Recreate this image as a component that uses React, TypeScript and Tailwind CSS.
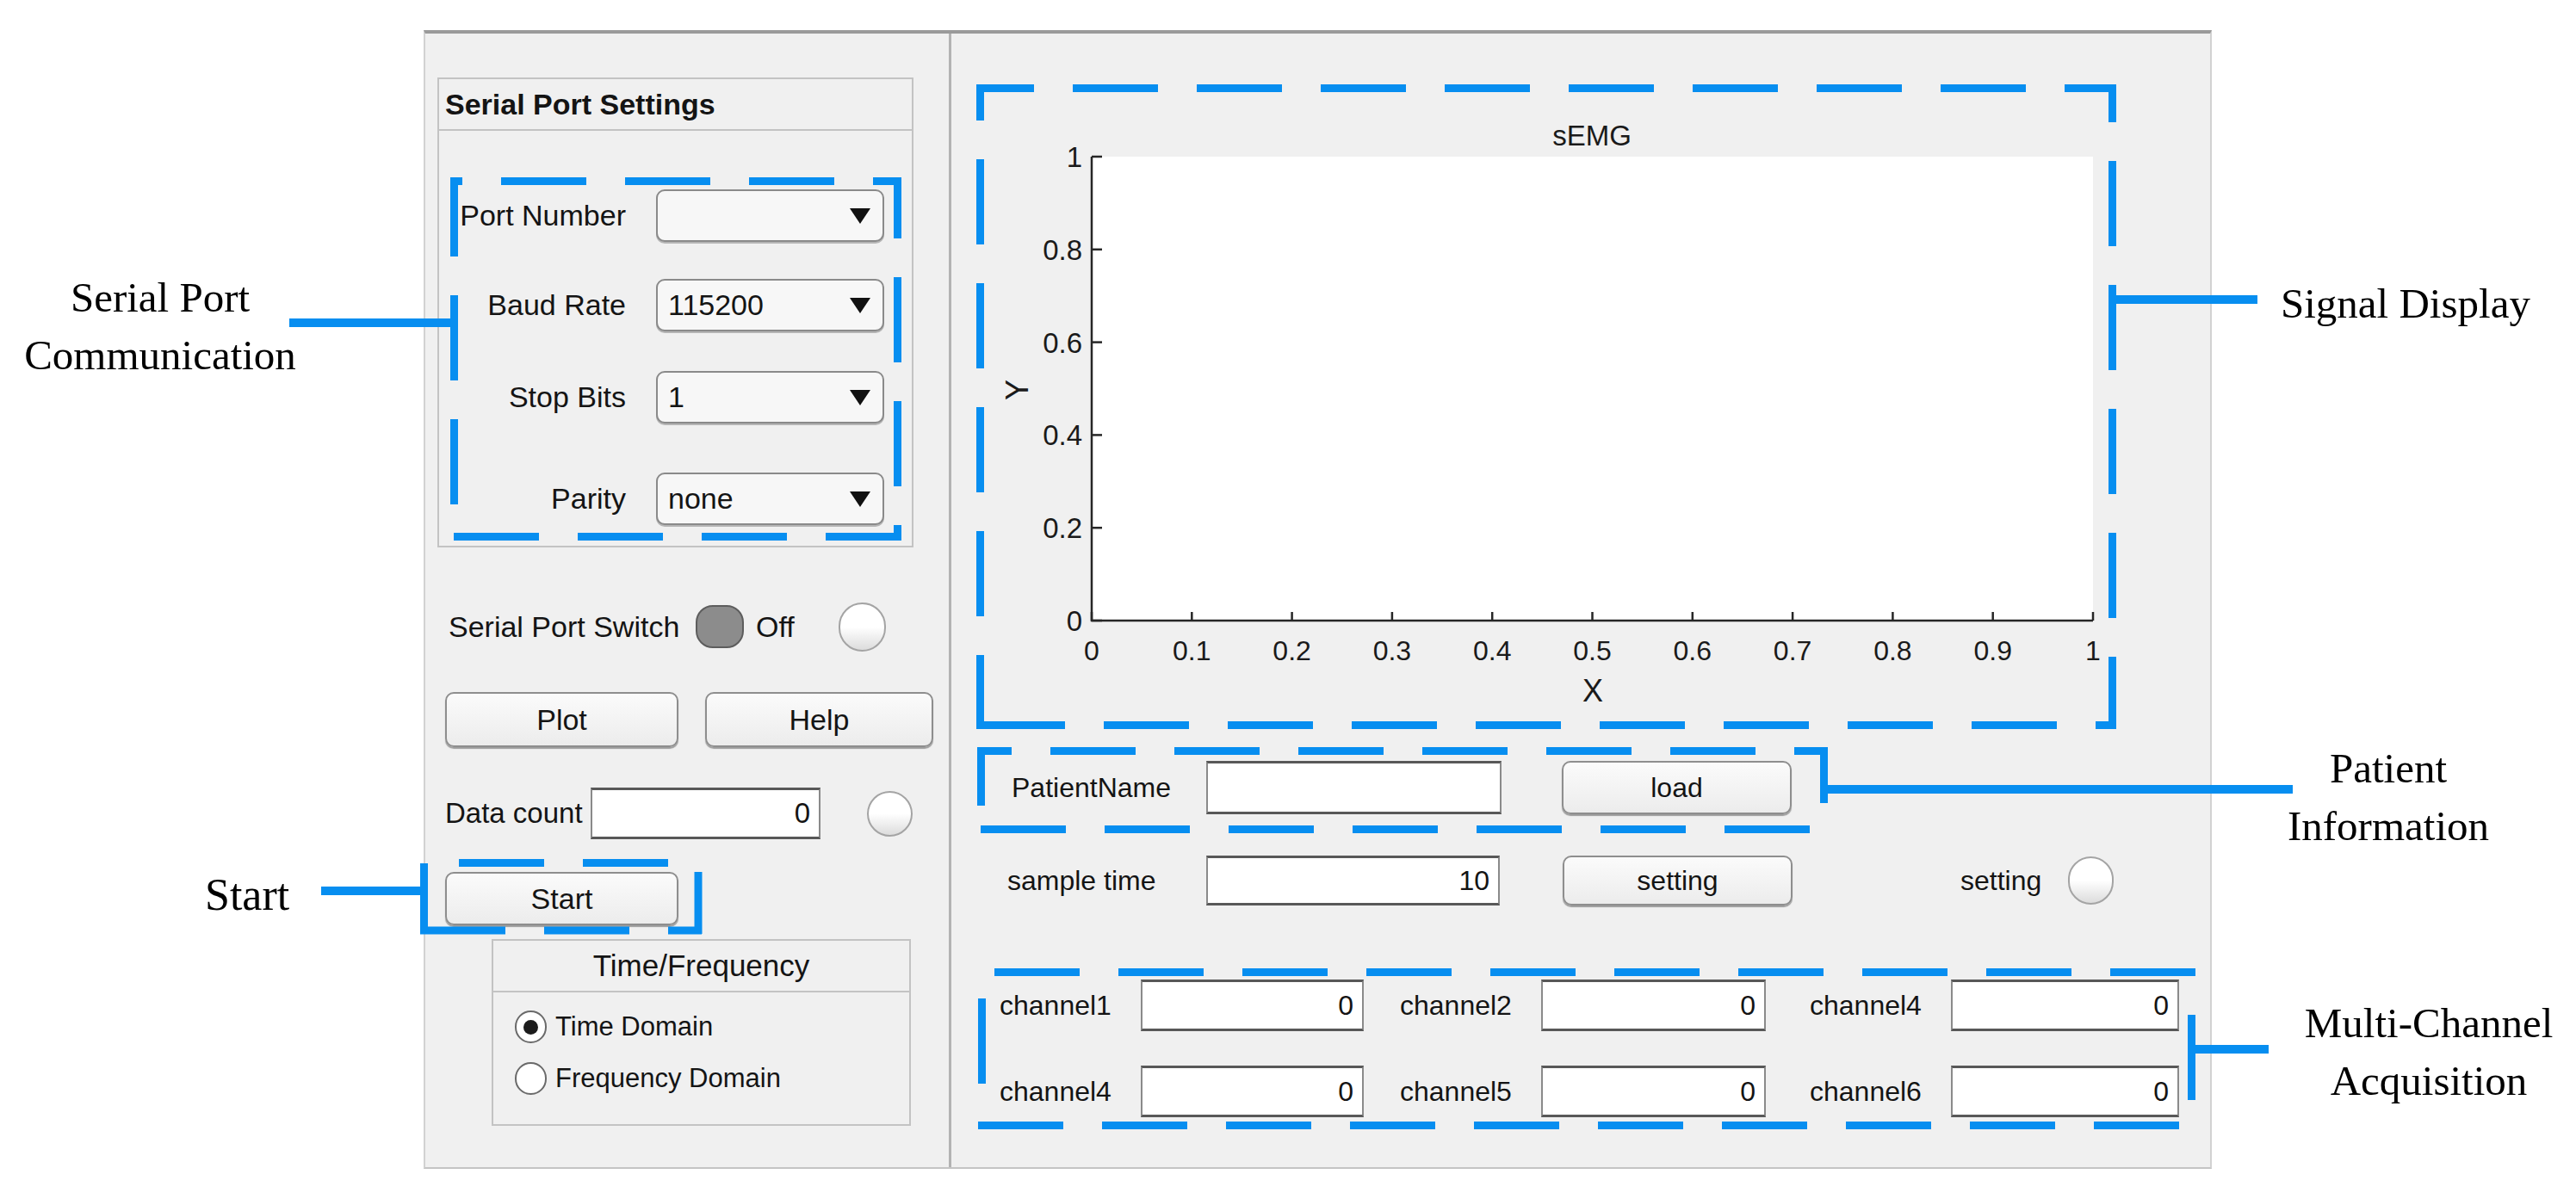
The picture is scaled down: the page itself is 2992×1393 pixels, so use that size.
import React from "react";

const BLUE = "#078ef0";

// one side of a dashed callout frame
type Seg = { x1: number; y1: number; x2: number; y2: number; off?: number; solid?: boolean };

const frameSegs: Seg[] = [
  // serial port settings
  { x1: 523, y1: 210.5, x2: 1047, y2: 210.5, off: 85 },
  { x1: 523, y1: 623.5, x2: 1047, y2: 623.5, off: 140 },
  { x1: 527.5, y1: 206, x2: 527.5, y2: 628, off: 7 },
  { x1: 1042.5, y1: 206, x2: 1042.5, y2: 628, off: 28 },
  // start button
  { x1: 488, y1: 1002.5, x2: 815, y2: 1002.5, off: 99 },
  { x1: 488, y1: 1081, x2: 815, y2: 1081, off: 0 },
  { x1: 492.5, y1: 1003, x2: 492.5, y2: 1085, solid: true },
  { x1: 811, y1: 1013, x2: 811, y2: 1085, solid: true },
  // signal display
  { x1: 1134, y1: 102.5, x2: 2458, y2: 102.5, off: 32 },
  { x1: 1134, y1: 842.5, x2: 2458, y2: 842.5, off: 140 },
  { x1: 1138.5, y1: 98, x2: 1138.5, y2: 847, off: 57 },
  { x1: 2453.5, y1: 98, x2: 2453.5, y2: 847, off: 55 },
  // patient information
  { x1: 1135, y1: 872.5, x2: 2123, y2: 872.5, off: 59 },
  { x1: 1135, y1: 963.5, x2: 2123, y2: 963.5, off: 140 },
  { x1: 1139.5, y1: 868, x2: 1139.5, y2: 968, off: 31 },
  { x1: 2118.5, y1: 868, x2: 2118.5, y2: 968, off: 34 },
  // channels
  { x1: 1136, y1: 1129.5, x2: 2550, y2: 1129.5, off: 125 },
  { x1: 1136, y1: 1307.5, x2: 2550, y2: 1307.5, off: 0 },
  { x1: 1140.5, y1: 1125, x2: 1140.5, y2: 1312, off: 109 },
  { x1: 2545.5, y1: 1179, x2: 2545.5, y2: 1278, solid: true },
];

const leaders = [
  { x1: 336, x2: 524, y: 375 },
  { x1: 373, x2: 490, y: 1035 },
  { x1: 2456, x2: 2622, y: 348 },
  { x1: 2121, x2: 2663, y: 917 },
  { x1: 2548, x2: 2635, y: 1219 },
];

function Overlay() {
  return (
    <svg
      className="pointer-events-none absolute left-0 top-0"
      width={2992}
      height={1393}
      viewBox="0 0 2992 1393"
    >
      {frameSegs.map((s, i) => (
        <line
          key={i}
          x1={s.x1}
          y1={s.y1}
          x2={s.x2}
          y2={s.y2}
          stroke={BLUE}
          strokeWidth={9}
          strokeDasharray={s.solid ? undefined : "99 45"}
          strokeDashoffset={s.solid ? undefined : s.off}
        />
      ))}
      {leaders.map((l, i) => (
        <line key={i} x1={l.x1} y1={l.y} x2={l.x2} y2={l.y} stroke={BLUE} strokeWidth={10} />
      ))}
    </svg>
  );
}

function Notes() {
  const serif = "absolute font-['Liberation_Serif','Times_New_Roman',serif] text-[49px] leading-[67px] text-black";
  return (
    <>
      <div className={`${serif} left-0 top-[312px] w-[372px] text-center`}>
        Serial Port
        <br />
        Communication
      </div>
      <div className={`${serif} left-[238px] top-[1006px] text-[52px]`}>Start</div>
      <div className={`${serif} left-[2649px] top-[319px] whitespace-nowrap`}>Signal Display</div>
      <div className={`${serif} left-[2574px] top-[859px] w-[400px] text-center`}>
        Patient
        <br />
        Information
      </div>
      <div className={`${serif} left-[2641px] top-[1155px] w-[360px] text-center`}>
        Multi-Channel
        <br />
        Acquisition
      </div>
    </>
  );
}

function Btn({ children, className = "" }: { children: React.ReactNode; className?: string }) {
  return (
    <div
      className={`flex items-center justify-center rounded-[10px] border-2 border-[#8e8e8e] bg-linear-to-b from-[#fbfbfb] to-[#ececec] shadow-[0_2px_1px_#9c9c9c] ${className}`}
    >
      {children}
    </div>
  );
}

function Edit({ value, className = "" }: { value: string; className?: string }) {
  return (
    <div
      className={`flex items-center justify-end border-x-2 border-y-[3px] border-x-[#8a8a8a] border-y-[#585858] bg-white pr-[10px] ${className}`}
    >
      {value}
    </div>
  );
}

function Lamp({ className = "" }: { className?: string }) {
  return (
    <div
      className={`shrink-0 rounded-full border-2 border-[#a4a4a4] bg-linear-to-b from-white via-white to-[#dcdcdc] ${className}`}
    />
  );
}

function Dropdown({ value }: { value: string }) {
  return (
    <div className="ml-[35px] flex h-full w-[265px] items-center rounded-[10px] border-2 border-[#8a8a8a] bg-[#f7f7f7] pl-[12px] shadow-[0_2px_0_#b5b5b5]">
      <span>{value}</span>
      <svg className="ml-auto mr-[14px]" width="24" height="18" viewBox="0 0 24 18">
        <path d="M0 0H24L12 18Z" fill="#111" />
      </svg>
    </div>
  );
}

function Field({ label, value, className }: { label: string; value: string; className: string }) {
  return (
    <div className={`flex h-[61px] items-center text-[34px] ${className}`}>
      <span className="w-[217px] whitespace-nowrap text-right">{label}</span>
      <Dropdown value={value} />
    </div>
  );
}

function Radio({ label, checked, className }: { label: string; checked?: boolean; className: string }) {
  return (
    <div className={`flex h-[38px] items-center pl-[25px] ${className}`}>
      <div className="flex h-[38px] w-[37px] items-center justify-center rounded-full border-2 border-[#6a6a6a] bg-white">
        {checked && <div className="h-[17px] w-[17px] rounded-full bg-[#1c1c1c]" />}
      </div>
      <span className="ml-[10px] whitespace-nowrap text-[31px]">{label}</span>
    </div>
  );
}

function LeftPanel() {
  return (
    <div className="flex w-[611px] shrink-0 flex-col border-r-[3px] border-[#b3b3b3]">
      <div className="ml-[14px] mt-[51px] flex h-[546px] w-[553px] flex-col border-2 border-[#c3c3c3]">
        <div className="flex h-[60px] items-center border-b-2 border-[#c3c3c3] pl-[7px] text-[34px] font-bold">
          Serial Port Settings
        </div>
        <Field label="Port Number" value="" className="mt-[68px]" />
        <Field label="Baud Rate" value="115200" className="mt-[43px]" />
        <Field label="Stop Bits" value="1" className="mt-[46px]" />
        <Field label="Parity" value="none" className="mt-[57px]" />
      </div>

      <div className="ml-[27px] mt-[63px] flex h-[58px] items-center text-[34px]">
        <span className="w-[271px] whitespace-nowrap">Serial Port Switch</span>
        <div className="ml-[16px] h-[50px] w-[56px] rounded-[20px] border-2 border-[#5d5d5d] bg-[#8c8c8c]" />
        <span className="ml-[14px]">Off</span>
        <Lamp className="ml-[51px] h-[57px] w-[55px]" />
      </div>

      <div className="ml-[23px] mt-[47px] flex h-[64px] text-[34px]">
        <Btn className="w-[271px]">Plot</Btn>
        <Btn className="ml-[31px] w-[265px]">Help</Btn>
      </div>

      <div className="ml-[23px] mt-[47px] flex h-[60px] items-center text-[33px]">
        <span className="w-[155px] whitespace-nowrap">Data count</span>
        <Edit value="0" className="ml-[14px] h-full w-[267px]" />
        <Lamp className="ml-[54px] h-[53px] w-[53px]" />
      </div>

      <div className="ml-[23px] mt-[38px] flex h-[62px] text-[34px]">
        <Btn className="w-[271px]">Start</Btn>
      </div>

      <div className="ml-[77px] mt-[16px] flex h-[217px] w-[487px] flex-col border-2 border-[#c3c3c3]">
        <div className="flex h-[60px] items-center justify-center border-b-2 border-[#c3c3c3] text-[35px]">
          Time/Frequency
        </div>
        <Radio label="Time Domain" checked className="mt-[21px]" />
        <Radio label="Frequency Domain" className="mt-[22px]" />
      </div>
    </div>
  );
}

// axes of the sEMG plot, in panel coordinates
const AX = { x0: 163, x1: 1326, y0: 143, y1: 682 };

function Chart() {
  const w = AX.x1 - AX.x0;
  const h = AX.y1 - AX.y0;
  const xs = Array.from({ length: 11 }, (_, i) => i);
  const ys = Array.from({ length: 6 }, (_, i) => i);
  return (
    <svg
      className="block shrink-0"
      width={1462}
      height={845}
      viewBox="0 0 1462 845"
      fontFamily="'Liberation Sans', Arial, sans-serif"
      fill="#1a1a1a"
    >
      <rect x={AX.x0} y={AX.y0} width={w} height={h} fill="#fff" />
      <path
        d={`M${AX.x0} ${AX.y0}V${AX.y1}H${AX.x1}`}
        stroke="#262626"
        strokeWidth={2.5}
        fill="none"
      />
      {xs.map((i) => {
        const x = AX.x0 + (w * i) / 10;
        return (
          <g key={i}>
            <line x1={x} y1={AX.y1} x2={x} y2={AX.y1 - 10} stroke="#262626" strokeWidth={2.5} />
            <text x={x} y={728} fontSize={32} textAnchor="middle">
              {i === 0 ? "0" : i === 10 ? "1" : `0.${i}`}
            </text>
          </g>
        );
      })}
      {ys.map((i) => {
        const y = AX.y1 - (h * i) / 5;
        return (
          <g key={i}>
            <line x1={AX.x0} y1={y} x2={AX.x0 + 12} y2={y} stroke="#262626" strokeWidth={2.5} />
            <text x={152} y={y + 12} fontSize={33} textAnchor="end">
              {i === 0 ? "0" : i === 5 ? "1" : `0.${i * 2}`}
            </text>
          </g>
        );
      })}
      <text x={744} y={130} fontSize={33} textAnchor="middle">
        sEMG
      </text>
      <text x={745} y={776} fontSize={36} textAnchor="middle">
        X
      </text>
      <text x={0} y={0} fontSize={36} textAnchor="middle" transform="translate(89 414) rotate(-90)">
        Y
      </text>
    </svg>
  );
}

function Channel({ label, width, className = "" }: { label: string; width: string; className?: string }) {
  return (
    <div className={`flex h-full items-center ${className}`}>
      <span className="w-[164px] whitespace-nowrap">{label}</span>
      <Edit value="0" className={`h-full ${width}`} />
    </div>
  );
}

function RightPanel() {
  return (
    <div className="flex flex-1 flex-col text-[32px]">
      <Chart />

      <div className="flex h-[62px] items-center pl-[70px]">
        <span className="w-[226px] whitespace-nowrap">PatientName</span>
        <Edit value="" className="h-full w-[343px]" />
        <Btn className="ml-[70px] h-full w-[267px]">load</Btn>
      </div>

      <div className="mt-[48px] flex h-[58px] items-center pl-[65px]">
        <span className="w-[231px] whitespace-nowrap">sample time</span>
        <Edit value="10" className="h-full w-[341px]" />
        <Btn className="ml-[73px] h-full w-[267px]">setting</Btn>
        <span className="ml-[195px] w-[125px]">setting</span>
        <Lamp className="h-[56px] w-[53px]" />
      </div>

      <div className="mt-[86px] flex h-[60px] pl-[56px]">
        <Channel label="channel1" width="w-[259px]" />
        <Channel label="channel2" width="w-[261px]" className="ml-[42px]" />
        <Channel label="channel4" width="w-[265px]" className="ml-[51px]" />
      </div>
      <div className="mt-[40px] flex h-[60px] pl-[56px]">
        <Channel label="channel4" width="w-[259px]" />
        <Channel label="channel5" width="w-[261px]" className="ml-[42px]" />
        <Channel label="channel6" width="w-[265px]" className="ml-[51px]" />
      </div>
    </div>
  );
}

export default function App() {
  return (
    <div className="relative h-[1393px] w-[2992px] overflow-hidden bg-white font-['Liberation_Sans',Arial,sans-serif] text-[#141414]">
      <div className="pt-[35px]">
        <div className="ml-[492px] flex h-[1323px] w-[2077px] border-x-2 border-b-2 border-t-4 border-x-[#d2d2d2] border-b-[#c4c4c4] border-t-[#9a9a9a] bg-[#f0f0f0]">
          <LeftPanel />
          <RightPanel />
        </div>
      </div>
      <Overlay />
      <Notes />
    </div>
  );
}
